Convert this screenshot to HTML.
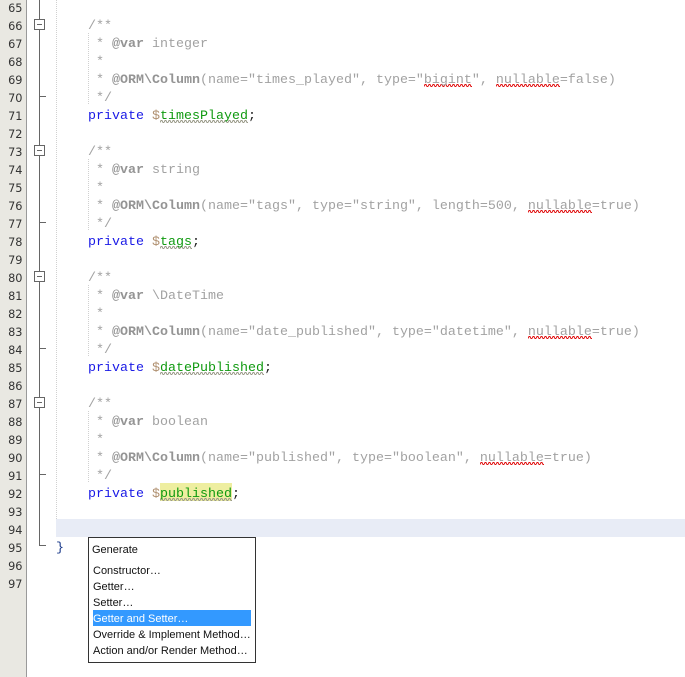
<!DOCTYPE html>
<html><head><meta charset="utf-8">
<style>
html,body{margin:0;padding:0;background:#fff;}
#p{position:relative;width:685px;height:677px;overflow:hidden;background:#fff;}
#g{position:absolute;left:0;top:0;width:26px;height:677px;background:#e9e8e2;border-right:1px solid #9a9a9a;}
.n{position:absolute;left:0;width:22.5px;margin-top:3px;text-align:right;font:11.3px/18px "DejaVu Sans",sans-serif;color:#333;}
.c{position:absolute;left:88px;margin-top:3px;white-space:pre;font:13.33px/18px "Liberation Mono",monospace;color:#a2a2a2;}
.c b{font-weight:bold;color:#949494;}
.k{color:#1a1ae6;}.d{color:#b09070;}.v{color:#109a10;}.s{color:#222;}
.m{position:absolute;left:93px;margin-top:1px;white-space:pre;font:11px/16px "Liberation Sans",sans-serif;color:#111;}
</style></head><body><div id="p">
<div id="g">
<div class="n" style="top:-3px">65</div><div class="n" style="top:15px">66</div><div class="n" style="top:33px">67</div><div class="n" style="top:51px">68</div><div class="n" style="top:69px">69</div><div class="n" style="top:87px">70</div><div class="n" style="top:105px">71</div><div class="n" style="top:123px">72</div><div class="n" style="top:141px">73</div><div class="n" style="top:159px">74</div><div class="n" style="top:177px">75</div><div class="n" style="top:195px">76</div><div class="n" style="top:213px">77</div><div class="n" style="top:231px">78</div><div class="n" style="top:249px">79</div><div class="n" style="top:267px">80</div><div class="n" style="top:285px">81</div><div class="n" style="top:303px">82</div><div class="n" style="top:321px">83</div><div class="n" style="top:339px">84</div><div class="n" style="top:357px">85</div><div class="n" style="top:375px">86</div><div class="n" style="top:393px">87</div><div class="n" style="top:411px">88</div><div class="n" style="top:429px">89</div><div class="n" style="top:447px">90</div><div class="n" style="top:465px">91</div><div class="n" style="top:483px">92</div><div class="n" style="top:501px">93</div><div class="n" style="top:519px">94</div><div class="n" style="top:537px">95</div><div class="n" style="top:555px">96</div><div class="n" style="top:573px">97</div>
</div>
<div style="position:absolute;left:56px;top:519px;width:629px;height:18px;background:#e8ecf6"></div>
<div style="position:absolute;left:160px;top:483px;width:72px;height:18px;background:#eeeea0"></div>
<svg width="685" height="677" style="position:absolute;left:0;top:0">
<defs>
<pattern id="r" width="4" height="3" patternUnits="userSpaceOnUse"><path d="M0 2.5L1 .5L2 .5L3 2.5L4 2.5" stroke="#e01010" fill="none" stroke-width="1"/></pattern>
<pattern id="o" width="4" height="3" patternUnits="userSpaceOnUse"><path d="M0 2.5L1 .5L2 .5L3 2.5L4 2.5" stroke="#9a9a88" fill="none" stroke-width="1"/></pattern>
</defs>
<path d="M39.5 0V545.5H46M40 96.5H46M40 222.5H46M40 348.5H46M40 474.5H46" stroke="#666" fill="none"/>
<g fill="#fff" stroke="#666">
<rect x="34.5" y="19.5" width="10" height="10"/><rect x="34.5" y="145.5" width="10" height="10"/><rect x="34.5" y="271.5" width="10" height="10"/><rect x="34.5" y="397.5" width="10" height="10"/>
</g>
<path d="M37 24.5H42M37 150.5H42M37 276.5H42M37 402.5H42" stroke="#666"/>
<path d="M56.5 0V519" stroke="#d0d0d0" stroke-dasharray="1 1" fill="none"/>
<path d="M88.5 33V105M88.5 159V231M88.5 285V357M88.5 411V483" stroke="#d0d0d0" stroke-dasharray="1 1" fill="none"/>
<g fill="url(#r)">
<rect x="424" y="84" width="48" height="3"/><rect x="496" y="84" width="64" height="3"/>
<rect x="528" y="210" width="64" height="3"/><rect x="528" y="336" width="64" height="3"/>
<rect x="480" y="462" width="64" height="3"/>
</g>
<g fill="url(#o)">
<rect x="160" y="120" width="88" height="3"/><rect x="160" y="246" width="32" height="3"/>
<rect x="160" y="372" width="104" height="3"/><rect x="160" y="498" width="72" height="3"/>
</g>
</svg>
<div class="c" style="top:15px">/**</div>
<div class="c" style="top:33px"> * <b>@var</b> integer</div>
<div class="c" style="top:51px"> *</div>
<div class="c" style="top:69px"> * <b>@ORM\Column</b>(name="times_played", type="bigint", nullable=false)</div>
<div class="c" style="top:87px"> */</div>
<div class="c" style="top:105px"><span class="k">private</span> <span class="d">$</span><span class="v">timesPlayed</span><span class="s">;</span></div>
<div class="c" style="top:141px">/**</div>
<div class="c" style="top:159px"> * <b>@var</b> string</div>
<div class="c" style="top:177px"> *</div>
<div class="c" style="top:195px"> * <b>@ORM\Column</b>(name="tags", type="string", length=500, nullable=true)</div>
<div class="c" style="top:213px"> */</div>
<div class="c" style="top:231px"><span class="k">private</span> <span class="d">$</span><span class="v">tags</span><span class="s">;</span></div>
<div class="c" style="top:267px">/**</div>
<div class="c" style="top:285px"> * <b>@var</b> \DateTime</div>
<div class="c" style="top:303px"> *</div>
<div class="c" style="top:321px"> * <b>@ORM\Column</b>(name="date_published", type="datetime", nullable=true)</div>
<div class="c" style="top:339px"> */</div>
<div class="c" style="top:357px"><span class="k">private</span> <span class="d">$</span><span class="v">datePublished</span><span class="s">;</span></div>
<div class="c" style="top:393px">/**</div>
<div class="c" style="top:411px"> * <b>@var</b> boolean</div>
<div class="c" style="top:429px"> *</div>
<div class="c" style="top:447px"> * <b>@ORM\Column</b>(name="published", type="boolean", nullable=true)</div>
<div class="c" style="top:465px"> */</div>
<div class="c" style="top:483px"><span class="k">private</span> <span class="d">$</span><span class="v">published</span><span class="s">;</span></div>
<div class="c" style="top:537px;left:56px;color:#1a3a8a">}</div>
<div style="position:absolute;left:88px;top:537px;width:166px;height:124px;border:1px solid #333;background:#fff"></div>
<div style="position:absolute;left:93px;top:610px;width:158px;height:16px;background:#3399ff"></div>
<div class="m" style="top:541px;left:92px">Generate</div>
<div class="m" style="top:562px">Constructor…</div>
<div class="m" style="top:578px">Getter…</div>
<div class="m" style="top:594px">Setter…</div>
<div class="m" style="top:610px;color:#fff">Getter and Setter…</div>
<div class="m" style="top:626px">Override &amp; Implement Method…</div>
<div class="m" style="top:642px">Action and/or Render Method…</div>
</div></body></html>
